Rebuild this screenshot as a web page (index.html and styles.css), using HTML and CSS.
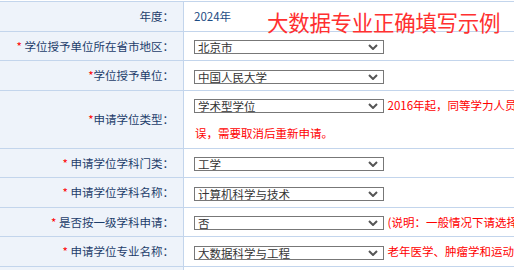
FILE: index.html
```html
<!DOCTYPE html>
<html lang="zh-CN">
<head>
    <meta charset="UTF-8">
    <meta name="viewport" content="width=device-width, initial-scale=1.0">
    <title>学位申请信息</title>
    <link rel="stylesheet" href="styles.css">
</head>
<body>
    <div class="page">
        <div class="stamp">大数据专业正确填写示例</div>
        <table class="form-table">
            <tr>
                <td class="label">年度：</td>
                <td class="value">2024年</td>
            </tr>
            <tr>
                <td class="label"><span class="req">*</span> 学位授予单位所在省市地区：</td>
                <td class="value">
                    <select class="field"><option>北京市</option></select>
                </td>
            </tr>
            <tr>
                <td class="label"><span class="req">*</span>学位授予单位：</td>
                <td class="value">
                    <select class="field"><option>中国人民大学</option></select>
                </td>
            </tr>
            <tr>
                <td class="label"><span class="req">*</span>申请学位类型：</td>
                <td class="value">
                    <select class="field"><option>学术型学位</option></select>
                    <span class="note">2016年起，同等学力人员申请硕士学位，学位类型只能选择学术型学位，如选择错</span><br>
                    <span class="note">误，需要取消后重新申请。</span>
                </td>
            </tr>
            <tr>
                <td class="label"><span class="req">*</span> 申请学位学科门类：</td>
                <td class="value">
                    <select class="field"><option>工学</option></select>
                </td>
            </tr>
            <tr>
                <td class="label"><span class="req">*</span> 申请学位学科名称：</td>
                <td class="value">
                    <select class="field"><option>计算机科学与技术</option></select>
                </td>
            </tr>
            <tr>
                <td class="label"><span class="req">*</span> 是否按一级学科申请：</td>
                <td class="value">
                    <select class="field"><option>否</option></select>
                    <span class="note">(说明：一般情况下请选择否，按二级学科申请)</span>
                </td>
            </tr>
            <tr>
                <td class="label"><span class="req">*</span> 申请学位专业名称：</td>
                <td class="value">
                    <select class="field"><option>大数据科学与工程</option></select>
                    <span class="note">老年医学、肿瘤学和运动医学等专业请按二级学科申请</span>
                </td>
            </tr>
            <tr>
                <td class="label"><span class="req">*</span> 研究方向：</td>
                <td class="value">
                    <select class="field"><option>数据挖掘</option></select>
                </td>
            </tr>
        </table>
    </div>
</body>
</html>
```

FILE: styles.css
```css
body {
    margin: 0;
    background-color: #fff;
    font-family: "Noto Sans CJK SC", "Noto Sans", sans-serif;
    font-size: 11.5px;
}
.page {
    position: relative;
    width: 514px;
    overflow: hidden;
}
.stamp {
    position: absolute;
    top: 8px;
    left: 267px;
    font-size: 21.5px;
    line-height: 28px;
    color: #ff3030;
    letter-spacing: -0.3px;
}
.form-table {
    width: 1000px;
    border-collapse: collapse;
    margin-top: 1px;
}
.form-table td {
    border-top: 1px solid #c3d5ec;
    border-bottom: 1px solid #c3d5ec;
    height: 28.5px;
    line-height: 28.5px;
    padding: 0;
    white-space: nowrap;
}
.label {
    width: 174px;
    padding-right: 9px !important;
    text-align: right;
    background-color: #eef3fa;
    border-right: 1px solid #c3d5ec;
    color: #1d3d6b;
}
.value {
    padding-left: 10px !important;
    color: #1d4c84;
}
.req {
    color: #ff0000;
}
.field {
    appearance: none;
    -webkit-appearance: none;
    box-sizing: border-box;
    width: 190px;
    height: 14px;
    margin: 0;
    padding: 0 0 0 3px;
    border: 1px solid #777;
    border-radius: 0;
    background: #fff url("data:image/svg+xml;utf8,<svg xmlns='http://www.w3.org/2000/svg' width='10' height='6' viewBox='0 0 10 6'><path d='M1 1 L5 5 L9 1' fill='none' stroke='%23555' stroke-width='2'/></svg>") no-repeat right 5px center;
    font-family: inherit;
    font-size: 11.5px;
    line-height: 12px;
    color: #333;
    vertical-align: middle;
}
.note {
    margin-left: 1px;
    color: #ff0000;
}
```
